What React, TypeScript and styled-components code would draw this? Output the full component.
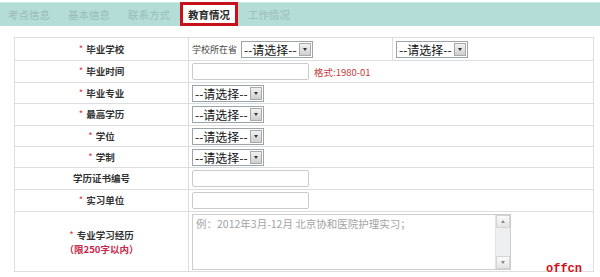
import React from "react"
import styled, { createGlobalStyle } from "styled-components"

const GlobalStyle = createGlobalStyle`
  body {
    margin: 0;
    background: #fff;
    font-family: "Noto Sans CJK SC", "Noto Sans", sans-serif;
  }
`

const tabs = ["考点信息", "基本信息", "联系方式", "教育情况", "工作情况"]
const activeTab = "教育情况"

const Select = () => (
  <SelectBox>
    <span>--请选择--</span>
    <SelectButton>
      <Arrow $dir="down" />
    </SelectButton>
  </SelectBox>
)

const Label = ({ text, required = true }: { text: string; required?: boolean }) => (
  <LabelCell>
    {required && <Star>*</Star>}
    {text}
  </LabelCell>
)

const App = () => {
  return (
    <Page>
      <GlobalStyle />
      <TabBar>
        {tabs.map(t => (
          <Tab key={t} $active={t === activeTab}>
            {t}
          </Tab>
        ))}
      </TabBar>

      <FormTable>
        <colgroup>
          <col style={{ width: 174 }} />
          <col style={{ width: 204 }} />
          <col />
        </colgroup>
        <tbody>
          <Row $h={23}>
            <Label text="毕业学校" />
            <ValueCell>
              <Caption>学校所在省</Caption>
              <Select />
            </ValueCell>
            <ValueCell>
              <Select />
            </ValueCell>
          </Row>
          <Row $h={22}>
            <Label text="毕业时间" />
            <ValueCell colSpan={2}>
              <TextInput />
              <Hint>格式:1980-01</Hint>
            </ValueCell>
          </Row>
          <Row $h={21}>
            <Label text="毕业专业" />
            <ValueCell colSpan={2}>
              <Select />
            </ValueCell>
          </Row>
          <Row $h={22}>
            <Label text="最高学历" />
            <ValueCell colSpan={2}>
              <Select />
            </ValueCell>
          </Row>
          <Row $h={21}>
            <Label text="学位" />
            <ValueCell colSpan={2}>
              <Select />
            </ValueCell>
          </Row>
          <Row $h={21}>
            <Label text="学制" />
            <ValueCell colSpan={2}>
              <Select />
            </ValueCell>
          </Row>
          <Row $h={22}>
            <Label text="学历证书编号" required={false} />
            <ValueCell colSpan={2}>
              <TextInput />
            </ValueCell>
          </Row>
          <Row $h={22}>
            <Label text="实习单位" />
            <ValueCell colSpan={2}>
              <TextInput />
            </ValueCell>
          </Row>
          <Row $h={60}>
            <LabelCell>
              <LabelLines>
                <LabelLine>
                  <Star>*</Star>专业学习经历
                </LabelLine>
                <LabelLine $red>（限250字以内）</LabelLine>
              </LabelLines>
            </LabelCell>
            <ValueCell colSpan={2}>
              <TextAreaBox>
                <TextArea placeholder="例：2012年3月-12月 北京协和医院护理实习；" />
                <ScrollBar>
                  <ScrollButton>
                    <Arrow $dir="up" />
                  </ScrollButton>
                  <ScrollButton>
                    <Arrow $dir="down" $light />
                  </ScrollButton>
                </ScrollBar>
              </TextAreaBox>
            </ValueCell>
          </Row>
        </tbody>
      </FormTable>

      <Watermark>offcn</Watermark>
    </Page>
  )
}

const Page = styled.div`
  position: relative;
  width: 600px;
  height: 277px;
  overflow: hidden;
  background: #fff;
`

const TabBar = styled.div`
  margin-top: 2px;
  height: 24px;
  display: flex;
  gap: 2px;
  background: #b3ddd6;
  box-shadow: inset 0 1px 0 #cbe9e4;
`

const Tab = styled.div<{ $active?: boolean }>`
  width: 58px;
  height: 24px;
  box-sizing: border-box;
  display: flex;
  align-items: center;
  justify-content: center;
  font-size: 10.5px;
  font-weight: ${p => (p.$active ? "bold" : "normal")};
  color: ${p => (p.$active ? "#2a2a2a" : "#9cbcb7")};
  background: ${p => (p.$active ? "#fff" : "transparent")};
  border: ${p => (p.$active ? "3px solid #c8101a" : "none")};
`

const FormTable = styled.table`
  margin: 11px 0 0 14px;
  width: 580px;
  border-collapse: collapse;
  table-layout: fixed;
`

const Row = styled.tr<{ $h: number }>`
  height: ${p => p.$h}px;
`

const LabelCell = styled.td`
  border: 1px solid #dadede;
  padding: 0;
  text-align: center;
  vertical-align: middle;
  font-size: 9.5px;
  font-weight: bold;
  color: #333;
  line-height: 11px;
`

const Star = styled.span`
  color: #e03535;
  font-weight: normal;
  margin-right: 3px;
`

const LabelLines = styled.div`
  display: flex;
  flex-direction: column;
  align-items: center;
`

const LabelLine = styled.span<{ $red?: boolean }>`
  display: block;
  font-size: 9.5px;
  line-height: 14px;
  color: ${p => (p.$red ? "#c8264a" : "#333")};
`

const ValueCell = styled.td`
  border: 1px solid #dadede;
  padding: 0 0 0 3px;
  vertical-align: middle;
  font-size: 9px;
  color: #444;
  white-space: nowrap;
`

const Caption = styled.span`
  display: inline-block;
  margin-right: 4px;
  vertical-align: middle;
`

const SelectBox = styled.span`
  display: inline-flex;
  align-items: center;
  justify-content: space-between;
  width: 72px;
  height: 17px;
  box-sizing: border-box;
  padding-left: 2px;
  border: 1px solid #9ba3ab;
  background: #fff;
  font-size: 12px;
  color: #111;
  vertical-align: middle;
  line-height: 15px;
`

const SelectButton = styled.span`
  display: flex;
  align-items: center;
  justify-content: center;
  width: 12px;
  height: 13px;
  margin-right: 1px;
  box-sizing: border-box;
  border: 1px solid #a9a9a9;
  background: linear-gradient(#f2f2f2, #cfcfcf);
`

const Arrow = styled.span<{ $dir: "up" | "down"; $light?: boolean }>`
  width: 0;
  height: 0;
  border-left: 2.5px solid transparent;
  border-right: 2.5px solid transparent;
  ${p =>
    p.$dir === "down"
      ? `border-top: 3px solid ${p.$light ? "#888" : "#333"};`
      : "border-bottom: 3px solid #888;"}
`

const TextInput = styled.input.attrs({ type: "text" })`
  width: 117px;
  height: 17px;
  box-sizing: border-box;
  border: 1px solid #cbcbcb;
  border-radius: 2px;
  padding: 0 2px;
  vertical-align: middle;
  outline: none;
`

const Hint = styled.span`
  margin-left: 5px;
  font-size: 9.5px;
  color: #c83a3a;
  vertical-align: middle;
`

const TextAreaBox = styled.div`
  display: flex;
  width: 319px;
  height: 56px;
  box-sizing: border-box;
  border: 1px solid #cdcdcd;
  background: #fff;
`

const TextArea = styled.textarea`
  flex: 1;
  border: none;
  resize: none;
  outline: none;
  padding: 2px 3px;
  font-family: "Noto Sans CJK SC", sans-serif;
  font-size: 10.5px;
  line-height: 13px;
  color: #333;
  background: transparent;

  &::placeholder {
    color: #a3a3a3;
  }
`

const ScrollBar = styled.div`
  width: 14px;
  display: flex;
  flex-direction: column;
  justify-content: space-between;
  background: #eeeff0;
  border-left: 1px solid #e2e2e2;
`

const ScrollButton = styled.span`
  display: flex;
  align-items: center;
  justify-content: center;
  height: 13px;
  box-sizing: border-box;
  border: 1px solid #d4d4d4;
  background: linear-gradient(#fafafa, #e4e4e4);
`

const Watermark = styled.div`
  position: absolute;
  left: 546px;
  top: 262px;
  font-family: "Liberation Mono", monospace;
  font-weight: bold;
  font-size: 12px;
  line-height: 14px;
  color: #d0121b;
`

export default App
